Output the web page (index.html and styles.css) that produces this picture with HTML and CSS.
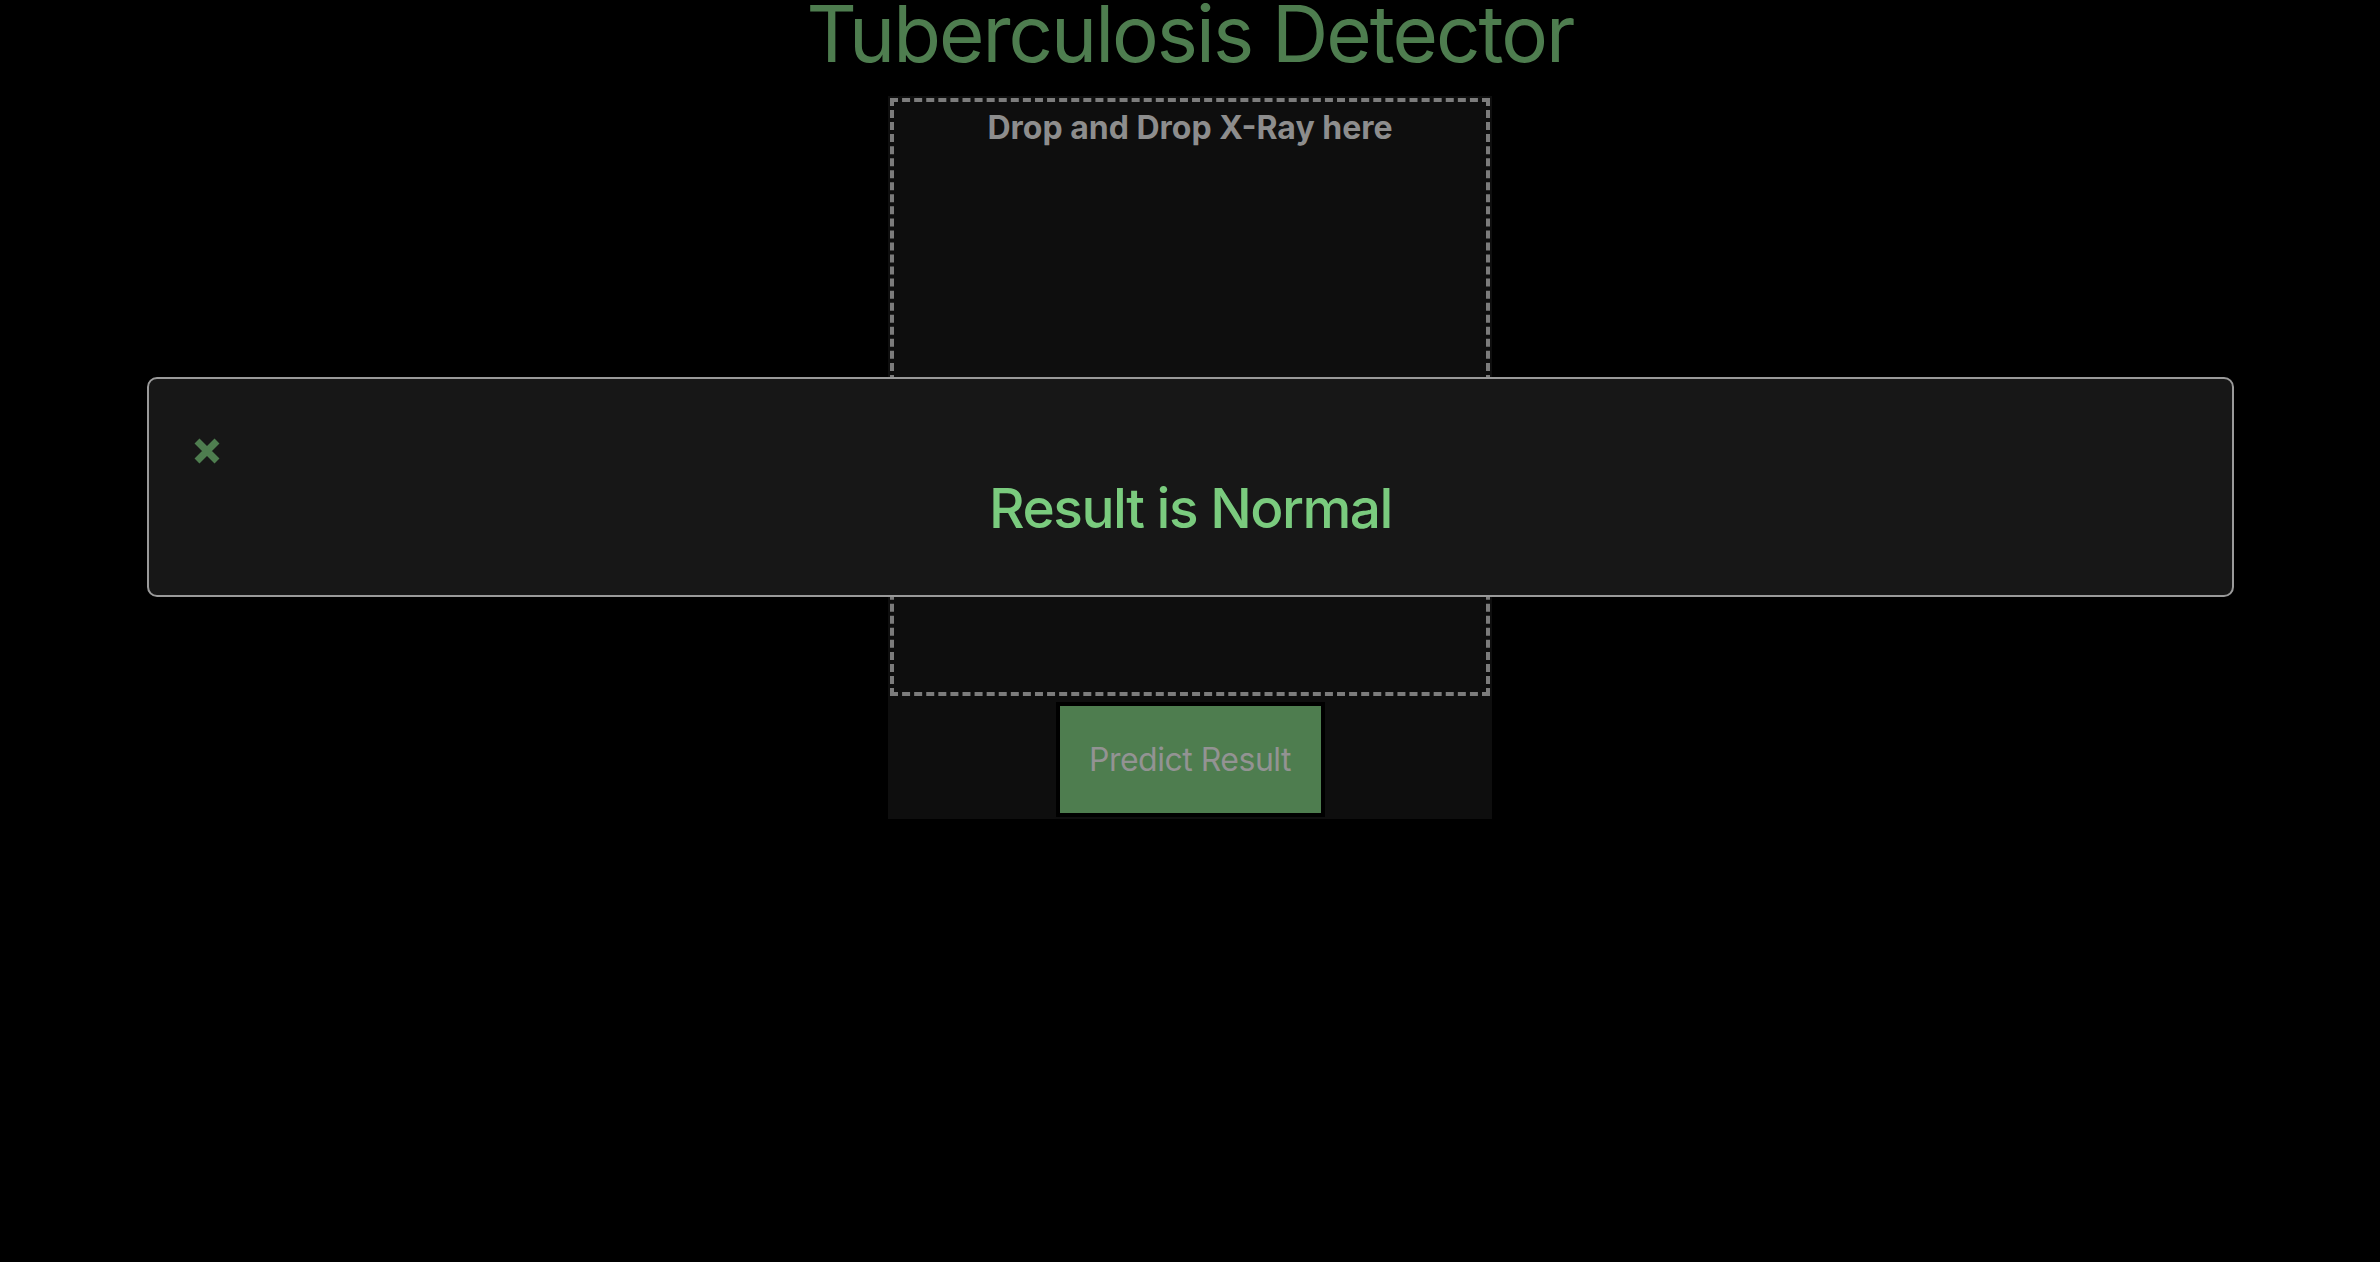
FILE: index.html
```html
<!DOCTYPE html>
<html lang="en">
<head>
<meta charset="utf-8">
<title>Tuberculosis Detector</title>
<link rel="stylesheet" href="styles.css">
</head>
<body>
  <main class="app">
    <h1 class="title">Tuberculosis Detector</h1>
    <section class="panel">
      <div class="dropzone">
        <p class="drop-label">Drop and Drop X-Ray here</p>
      </div>
      <button class="predict" type="button">Predict Result</button>
    </section>
  </main>

  <div class="modal">
    <button class="close" type="button" aria-label="Close">
      <svg viewBox="0 0 28 30" width="28" height="30" aria-hidden="true">
        <path d="M4 5 L24 25 M24 5 L4 25" stroke="#4e7d4f" stroke-width="7" stroke-linecap="butt" fill="none"/>
      </svg>
    </button>
    <h2 class="result">Result is Normal</h2>
  </div>
</body>
</html>
```

FILE: styles.css
```css
* {
  box-sizing: border-box;
}

html, body {
  margin: 0;
  padding: 0;
  background: #000;
  height: 100%;
}

body {
  font-family: Inter, "Noto Sans", "DejaVu Sans", sans-serif;
  color: #8c8c8c;
}

.app {
  display: flex;
  flex-direction: column;
  align-items: center;
}

.title {
  margin: 0 0 28px;
  font-size: 78px;
  line-height: 68px;
  font-weight: 400;
  color: #4e7d4f;
  letter-spacing: -2px;
}

.panel {
  width: 604px;
  background: #0e0e0e;
  padding: 2px 2px 2px;
  display: flex;
  flex-direction: column;
  align-items: center;
}

.dropzone {
  width: 600px;
  height: 598px;
  border: 4px dashed #7c7c7c;
  display: flex;
  justify-content: center;
}

.drop-label {
  margin: 6px 0 0;
  font-size: 32px;
  line-height: 40px;
  font-weight: 700;
  color: #8d8d8d;
}

.predict {
  margin-top: 6px;
  width: 269px;
  height: 115px;
  border: 4px solid #000;
  background: #4e7d4f;
  color: #939393;
  font-family: inherit;
  font-size: 32px;
  font-weight: 400;
  letter-spacing: -0.5px;
  padding: 0;
}

.modal {
  position: fixed;
  top: 377px;
  left: 147px;
  width: 2087px;
  height: 220px;
  background: #171717;
  border: 2px solid #9a9a9a;
  border-radius: 10px;
  padding: 57px 44px 0;
  display: flex;
  flex-direction: column;
}

.close {
  align-self: flex-start;
  width: 28px;
  height: 30px;
  padding: 0;
  border: 0;
  background: transparent;
  display: block;
}

.close svg {
  display: block;
}

.result {
  margin: 9px 0 0;
  text-align: center;
  font-size: 55px;
  line-height: 66px;
  font-weight: 500;
  letter-spacing: -1.5px;
  color: #7acb7e;
}
```
